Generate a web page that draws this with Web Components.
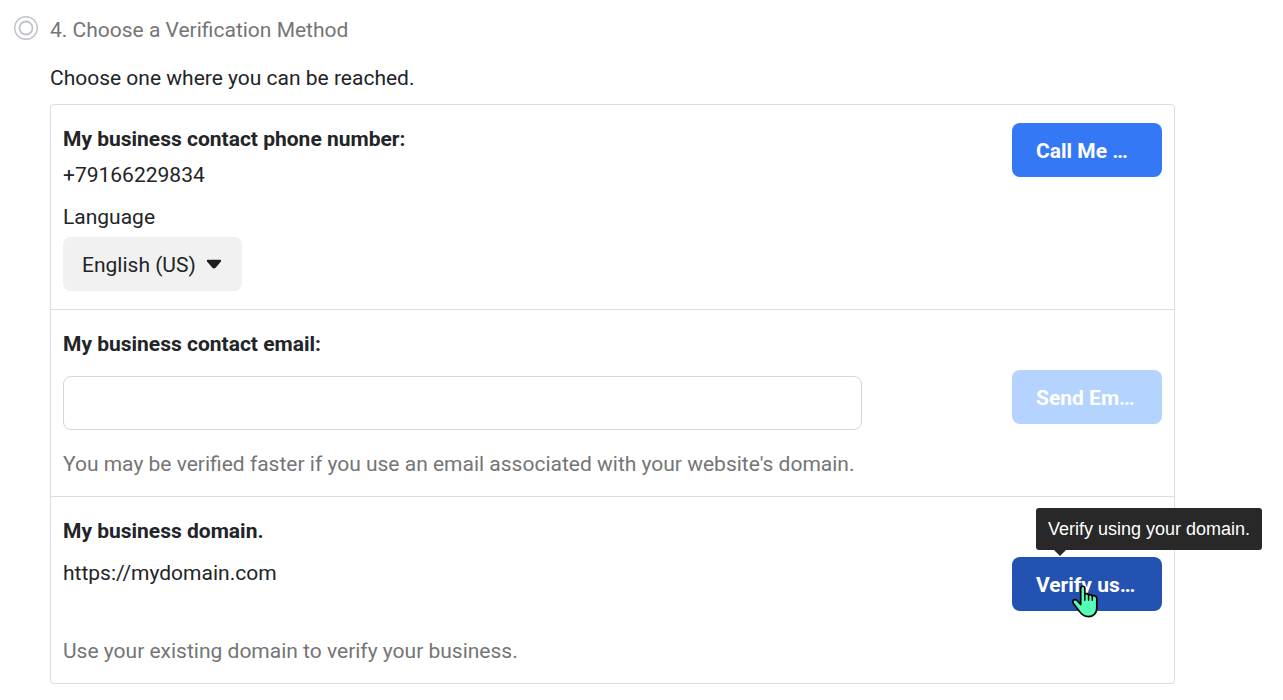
<!DOCTYPE html>
<html lang="en">
<head>
<meta charset="utf-8">
<meta name="viewport" content="width=device-width, initial-scale=1">
<title>Choose a Verification Method</title>
<style>
  body {
    margin: 0;
    background: #fff;
    color: #222427;
    font: 21px/32px Roboto, "Liberation Sans", sans-serif;
    --muted: #757575;
    --line: #dadde1;
  }
</style>
</head>
<body>
<verification-step>
  <span slot="title">4. Choose a Verification Method</span>
  <span slot="intro">Choose one where you can be reached.</span>
  <phone-option>
    <span slot="label">My business contact phone number:</span>
    <span slot="value">+79166229834</span>
    <action-button slot="action">Call Me …</action-button>
  </phone-option>
  <email-option>
    <span slot="label">My business contact email:</span>
    <span slot="hint">You may be verified faster if you use an email associated with your website's domain.</span>
    <action-button slot="action" disabled>Send Em…</action-button>
  </email-option>
  <domain-option>
    <span slot="label">My business domain.</span>
    <span slot="value">https://mydomain.com</span>
    <span slot="hint">Use your existing domain to verify your business.</span>
    <action-button slot="action" pressed>Verify us…
      <tool-tip slot="overlay">Verify using your domain.</tool-tip>
      <hand-pointer slot="overlay"></hand-pointer>
    </action-button>
  </domain-option>
</verification-step>

<script>
const define = (name, html, setup) => {
  const template = document.createElement('template');
  template.innerHTML = html;
  customElements.define(name, class extends HTMLElement {
    constructor() {
      super();
      this.attachShadow({ mode: 'open' }).append(template.content.cloneNode(true));
    }
    connectedCallback() { if (setup) setup(this, this.shadowRoot); }
  });
};

const rowStyle = `
  :host {
    display: grid; grid-template-columns: minmax(0, 1fr) 150px; column-gap: 150px; align-items: start;
    padding: 18px 12px 16px; border-top: 1px solid var(--line);
  }
  .label { display: block; margin: 0; font: inherit; font-weight: 700; }
  p { margin: 0; }
  .hint { color: var(--muted); }
`;

define('verification-step', `
  <style>
    :host { display: block; padding: 14px 108px 16px 14px; }
    header { display: flex; gap: 12px; }
    svg { flex: none; margin-top: 2px; }
    h2 { margin: 0; font: inherit; color: var(--muted); }
    .body { margin-left: 36px; }
    .intro { margin: 16px 0 10px; }
    .panel { border: 1px solid var(--line); border-top: 0; border-radius: 4px; }
  </style>
  <header>
    <svg width="24" height="24" viewBox="0 0 24 24" fill="none" stroke="#bec3c9" aria-hidden="true">
      <circle cx="12" cy="12" r="11.3" stroke-width="1.4"/>
      <circle cx="12" cy="12" r="6.500" stroke-width="1.800"/>
    </svg>
    <h2><slot name="title"></slot></h2>
  </header>
  <div class="body">
    <p class="intro"><slot name="intro"></slot></p>
    <div class="panel"><slot></slot></div>
  </div>`);

define('action-button', `
  <style>
    :host { display: block; position: relative; }
    button {
      display: block; width: 100%; height: 54px; padding: 2px 24px 0; border: 0; border-radius: 8px;
      background: #3578f6; color: #fff; font: inherit; font-weight: 700;
      text-align: left; white-space: nowrap; overflow: hidden; cursor: pointer;
    }
    button:disabled { background: #b4d3ff; cursor: default; }
    :host([pressed]) button { background: #2452b2; }
  </style>
  <button type="button"><slot></slot></button>
  <slot name="overlay"></slot>`,
  (host, root) => { root.querySelector('button').disabled = host.hasAttribute('disabled'); });

define('language-select', `
  <style>
    :host { display: block; }
    label { display: block; margin-bottom: 4px; }
    .control { display: inline-grid; vertical-align: top; align-items: center; }
    select, svg { grid-area: 1 / 1; }
    select {
      appearance: none; height: 54px; width: 179px; padding: 2px 44px 0 19px; border: 0; border-radius: 8px;
      background: #f1f1f1; color: inherit; font: inherit;
    }
    svg { justify-self: end; margin-right: 20px; pointer-events: none; }
  </style>
  <label for="language">Language</label>
  <div class="control">
    <select id="language"><option>English (US)</option></select>
    <svg width="16" height="10" viewBox="0 0 16 10" aria-hidden="true">
      <path d="M2 .8h12c1.200 0 1.600 1 .8 1.900L9.600 8.800c-.9 1-2.300 1-3.200 0L1.200 2.700C.4 1.800.8.8 2 .8z" fill="#1c1e21"/>
    </svg>
  </div>`);

define('phone-option', `
  <style>${rowStyle}
    :host { padding-bottom: 18px; border-radius: 4px 4px 0 0; }
    .value { margin: 4px 0 10px; }
  </style>
  <div>
    <h3 class="label"><slot name="label"></slot></h3>
    <p class="value"><slot name="value"></slot></p>
    <language-select></language-select>
  </div>
  <slot name="action"></slot>`);

define('email-option', `
  <style>${rowStyle}
    ::slotted(action-button) { margin-top: 42px; }
    input {
      display: block; box-sizing: border-box; width: 100%; height: 54px; margin: 16px 0 18px;
      padding: 0 18px; border: 1px solid #d4d6d9; border-radius: 8px; background: #fff; color: inherit; font: inherit;
    }
  </style>
  <div>
    <label class="label" for="email"><slot name="label"></slot></label>
    <input id="email" type="email">
    <p class="hint"><slot name="hint"></slot></p>
  </div>
  <slot name="action"></slot>`);

define('domain-option', `
  <style>${rowStyle}
    ::slotted(action-button) { margin-top: 42px; }
    .value { margin: 10px 0 46px; }
  </style>
  <div>
    <h3 class="label"><slot name="label"></slot></h3>
    <p class="value"><slot name="value"></slot></p>
    <p class="hint"><slot name="hint"></slot></p>
  </div>
  <slot name="action"></slot>`);

define('tool-tip', `
  <style>
    :host {
      position: absolute; left: 24px; bottom: 61px; padding: 9px 12px; border-radius: 3px;
      background: #282828; color: #fff; font: 18px/24px "Liberation Sans", Arial, sans-serif; white-space: nowrap;
    }
    :host::after {
      content: ""; position: absolute; left: 18px; top: 100%;
      border: 6px solid transparent; border-top-color: #282828; border-bottom: 0;
    }
  </style>
  <slot></slot>`,
  host => host.setAttribute('role', 'tooltip'));

define('hand-pointer', `
  <style>
    :host { position: absolute; left: 59px; top: 27px; pointer-events: none; }
    svg { display: block; }
  </style>
  <svg width="28" height="34" viewBox="0 0 28 34" aria-hidden="true">
    <path d="M9.700 20.500V4.500c0-3 4.100-3 4.100 0v5.600c1.300-.9 3.200-.5 3.700.9 1.400-.8 3.100-.4 3.600.9 2.300-.9 4.700.3 4.700 2.600v9.400c0 5-3.200 8.700-8.300 8.700-4.300 0-6.900-2-9-5.200l-6.200-8.200c-1.500-2.400.9-4.600 3.300-3.200z" fill="#55ffb8" stroke="#000" stroke-width="1.700" stroke-linejoin="round"/>
    <path d="M13.800 10v6.200M17.600 11v5.200M21.300 12v4.200" fill="none" stroke="#000" stroke-width="1.500" stroke-linecap="round"/>
  </svg>`);
</script>
</body>
</html>
